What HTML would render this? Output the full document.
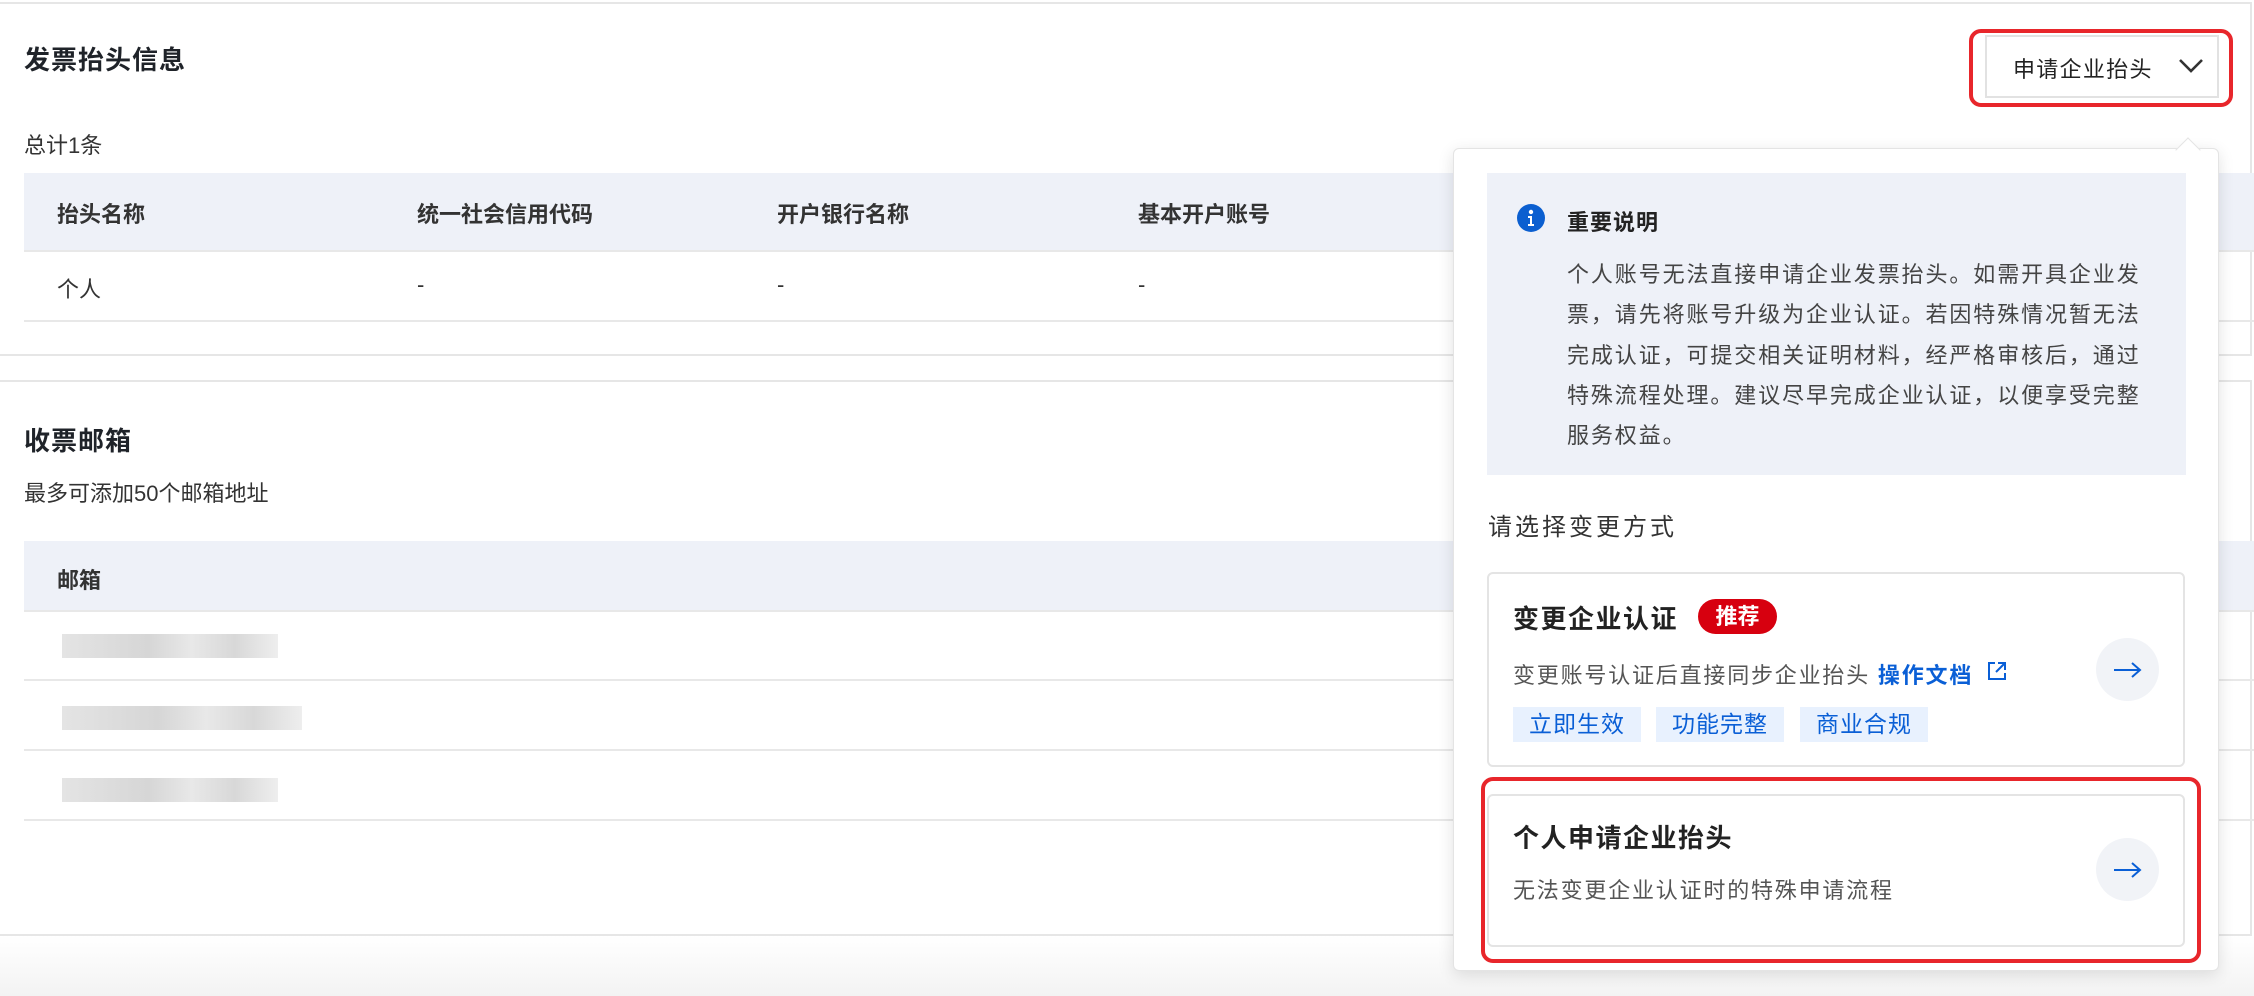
<!DOCTYPE html>
<html><head><meta charset="utf-8"><style>
*{box-sizing:border-box;margin:0;padding:0}
body{width:2254px;height:996px;overflow:hidden;background:linear-gradient(#fff 0,#fff 935px,#f3f3f3 996px);font-family:"Liberation Sans","Noto Sans CJK SC",sans-serif;color:#1f2329;position:relative}
.abs{position:absolute}
.card{position:absolute;left:-2px;right:2px;border:2px solid #e6e6e6;border-left:none;background:#fff}
.h{font-weight:bold;font-size:26px;letter-spacing:1px}
.t{font-size:22px;color:#333;white-space:nowrap}
.th{background:#eef1f8;position:absolute;left:24px;right:0}
.line{position:absolute;left:24px;right:0;height:2px;background:#e8e8e8}
.blur{position:absolute;height:24px;background:linear-gradient(90deg,#e4e4e4,#d6d6d6 40%,#e8e8e8 60%,#d8d8d8 80%,#eee)}
.tag{position:absolute;top:707px;height:35px;width:128px;background:#e8f1fe;color:#0a5fd6;font-size:23px;text-align:center;line-height:35px;letter-spacing:1px}
.circ{position:absolute;width:63px;height:63px;border-radius:50%;background:#f1f3f7}
</style></head><body>
<div class="card" style="top:2px;height:354px"></div>
<div class="card" style="top:380px;height:556px"></div>
<div class="abs h" style="left:24px;top:40px">发票抬头信息</div>
<div class="abs t" style="left:24px;top:128px">总计1条</div>
<div class="th" style="top:173px;height:77px"></div>
<div class="line" style="top:250px"></div>
<div class="line" style="top:320px"></div>
<div class="abs t" style="left:57px;top:197px;font-weight:600;color:#333">抬头名称</div>
<div class="abs t" style="left:417px;top:197px;font-weight:600;color:#333">统一社会信用代码</div>
<div class="abs t" style="left:777px;top:197px;font-weight:600;color:#333">开户银行名称</div>
<div class="abs t" style="left:1138px;top:197px;font-weight:600;color:#333">基本开户账号</div>
<div class="abs t" style="left:57px;top:272px">个人</div>
<div class="abs t" style="left:417px;top:272px">-</div>
<div class="abs t" style="left:777px;top:272px">-</div>
<div class="abs t" style="left:1138px;top:272px">-</div>

<div class="abs h" style="left:24px;top:421px">收票邮箱</div>
<div class="abs t" style="left:24px;top:476px">最多可添加50个邮箱地址</div>
<div class="th" style="top:541px;height:69px"></div>
<div class="line" style="top:610px"></div>
<div class="line" style="top:679px"></div>
<div class="line" style="top:749px"></div>
<div class="line" style="top:819px"></div>
<div class="abs t" style="left:57px;top:563px;font-weight:600">邮箱</div>
<div class="blur" style="left:62px;top:634px;width:216px"></div>
<div class="blur" style="left:62px;top:706px;width:240px"></div>
<div class="blur" style="left:62px;top:778px;width:216px"></div>

<div class="abs" style="left:1969px;top:29px;width:264px;height:78px;border:4px solid #e8262b;border-radius:12px"></div>
<div class="abs" style="left:1985px;top:35px;width:234px;height:63px;border:2px solid #e2e2e2;background:#fff"></div>
<div class="abs" style="left:2013px;top:52px;font-size:22px;letter-spacing:1.3px;color:#222">申请企业抬头</div>
<svg class="abs" style="left:2178px;top:58px" width="26" height="16"><path d="M2 2 L13 13 L24 2" fill="none" stroke="#333" stroke-width="2.6"/></svg>

<div class="abs" style="left:1453px;top:148px;width:766px;height:823px;background:#fff;border:1px solid #e4e4e4;border-radius:6px;box-shadow:0 4px 16px rgba(0,0,0,.12)"></div>
<div class="abs" style="left:2179px;top:141px;width:18px;height:18px;background:#fff;transform:rotate(45deg);border-left:1px solid #e4e4e4;border-top:1px solid #e4e4e4"></div>
<div class="abs" style="left:1487px;top:173px;width:699px;height:302px;background:#eef1f8"></div>
<svg class="abs" style="left:1517px;top:204px" width="28" height="28"><circle cx="14" cy="14" r="14" fill="#0b5fd0"/><circle cx="14" cy="8" r="2.2" fill="#fff"/><path d="M11 12h4v8h2v2h-6v-2h2v-6h-2z" fill="#fff"/></svg>
<div class="abs" style="left:1567px;top:205px;font-size:22px;font-weight:bold;color:#222;letter-spacing:1px">重要说明</div>
<div class="abs" style="left:1567px;top:255px;width:580px;font-size:22px;line-height:40.3px;color:#444;letter-spacing:1.9px">个人账号无法直接申请企业发票抬头。如需开具企业发票，请先将账号升级为企业认证。若因特殊情况暂无法完成认证，可提交相关证明材料，经严格审核后，通过特殊流程处理。建议尽早完成企业认证，以便享受完整服务权益。</div>
<div class="abs" style="left:1488px;top:507px;font-size:24px;color:#333;letter-spacing:3px">请选择变更方式</div>

<div class="abs" style="left:1487px;top:572px;width:698px;height:195px;border:2px solid #e4e4e4;border-radius:6px"></div>
<div class="abs" style="left:1513px;top:599px;font-size:26px;font-weight:bold;color:#222;letter-spacing:1.5px">变更企业认证</div>
<div class="abs" style="left:1698px;top:599px;width:79px;height:35px;border-radius:18px;background:#d7000f;color:#fff;font-weight:bold;font-size:22px;text-align:center;line-height:35px">推荐</div>
<div class="abs" style="left:1513px;top:658px;font-size:22px;color:#555;letter-spacing:1.8px;white-space:nowrap">变更账号认证后直接同步企业抬头 <span style="color:#0a5fd6;font-weight:bold">操作文档</span></div>
<svg class="abs" style="left:1986px;top:660px" width="22" height="22"><path d="M9 3H3v16h16v-6M12 3h7v7M19 3l-9 9" fill="none" stroke="#0a5fd6" stroke-width="2"/></svg>
<div class="tag" style="left:1513px">立即生效</div>
<div class="tag" style="left:1656px">功能完整</div>
<div class="tag" style="left:1800px">商业合规</div>
<div class="circ" style="left:2096px;top:638px"></div>
<svg class="abs" style="left:2113px;top:661px" width="30" height="18"><path d="M1 9H27M19 2L27 9L19 16" fill="none" stroke="#0a5fd6" stroke-width="2"/></svg>

<div class="abs" style="left:1481px;top:777px;width:720px;height:186px;border:4px solid #e8262b;border-radius:12px"></div>
<div class="abs" style="left:1487px;top:794px;width:698px;height:153px;border:2px solid #e4e4e4;border-radius:6px"></div>
<div class="abs" style="left:1513px;top:818px;font-size:26px;font-weight:bold;color:#222;letter-spacing:1.5px">个人申请企业抬头</div>
<div class="abs" style="left:1513px;top:873px;font-size:22px;color:#555;letter-spacing:1.8px">无法变更企业认证时的特殊申请流程</div>
<div class="circ" style="left:2096px;top:838px"></div>
<svg class="abs" style="left:2113px;top:861px" width="30" height="18"><path d="M1 9H27M19 2L27 9L19 16" fill="none" stroke="#0a5fd6" stroke-width="2"/></svg>
</body></html>
